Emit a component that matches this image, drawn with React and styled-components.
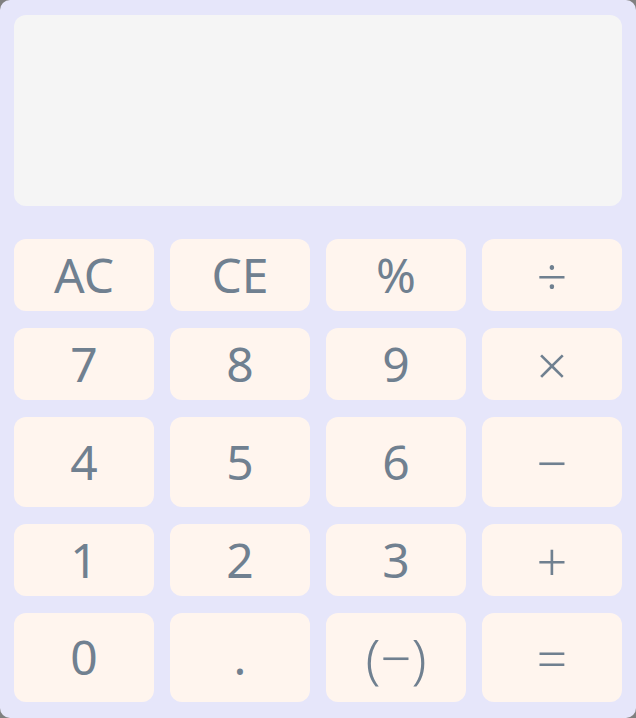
import styled, { createGlobalStyle } from 'styled-components'

const GlobalStyle = createGlobalStyle`
  html, body {
    margin: 0;
    padding: 0;
    background: #808080;
  }
  * {
    box-sizing: border-box;
  }
`

const keys = [
  { label: 'AC' },
  { label: 'CE' },
  { label: '%' },
  { label: '÷', op: true },
  { label: '7' },
  { label: '8' },
  { label: '9' },
  { label: '×', op: true },
  { label: '4', tall: true },
  { label: '5', tall: true },
  { label: '6', tall: true },
  { label: '−', tall: true, op: true },
  { label: '1' },
  { label: '2' },
  { label: '3' },
  { label: '+', op: true },
  { label: '0', tall: true },
  { label: '.', tall: true },
  { label: '(−)', tall: true, op: true },
  { label: '=', tall: true, op: true },
]

function App() {
  return (
    <>
      <GlobalStyle />
      <Calculator>
        <Display />
        <Keypad>
          {keys.map((k) => (
            <Key key={k.label} $tall={k.tall} $op={k.op}>
              {k.label}
            </Key>
          ))}
        </Keypad>
      </Calculator>
    </>
  )
}

export default App

const Calculator = styled.div`
  width: 636px;
  height: 718px;
  background: #e6e6fa;
  border-radius: 10px;
  padding: 15px 14px 16px;
  display: flex;
  flex-direction: column;
  gap: 33px;
`

const Display = styled.div`
  height: 191px;
  background: #f5f5f5;
  border-radius: 12px;
`

const Keypad = styled.div`
  display: grid;
  grid-template-columns: repeat(4, 1fr);
  column-gap: 16px;
  row-gap: 17px;
`

const Key = styled.button`
  height: ${(p) => (p.$tall ? '89.5px' : '72px')};
  border: none;
  border-radius: 12px;
  background: #fff5ee;
  color: #708090;
  font-family: 'Noto Sans', 'Open Sans', sans-serif;
  font-size: ${(p) => (p.$op ? '54px' : '48px')};
  font-weight: ${(p) => (p.$op ? 300 : 400)};
  line-height: 1;
  display: flex;
  align-items: center;
  justify-content: center;
  padding: 0;
  cursor: pointer;
`
